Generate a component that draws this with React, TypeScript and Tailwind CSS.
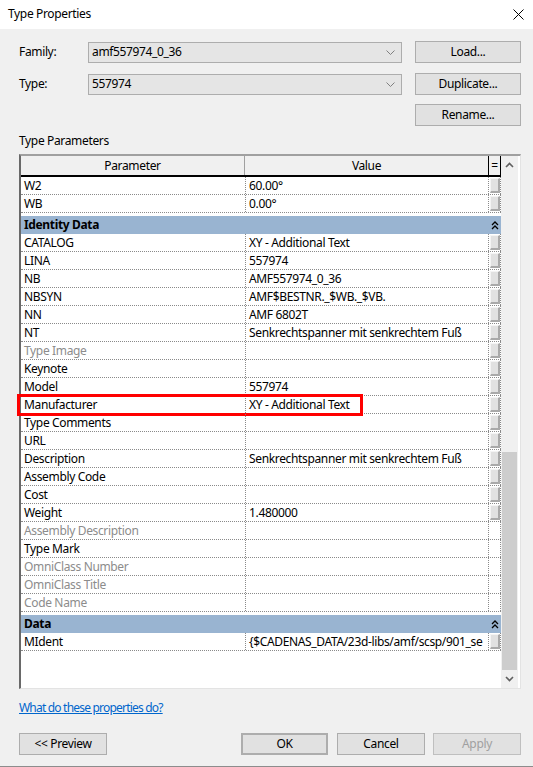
import React from "react";

type Row =
  | { kind: "group"; label: string; gapTop?: boolean }
  | { kind: "row"; p: string; v?: string; gray?: boolean; btn?: boolean; hl?: boolean };

const rows: Row[] = [
  { kind: "row", p: "W2", v: "60.00°", btn: true },
  { kind: "row", p: "WB", v: "0.00°", btn: true },
  { kind: "group", label: "Identity Data", gapTop: true },
  { kind: "row", p: "CATALOG", v: "XY - Additional Text", btn: true },
  { kind: "row", p: "LINA", v: "557974", btn: true },
  { kind: "row", p: "NB", v: "AMF557974_0_36", btn: true },
  { kind: "row", p: "NBSYN", v: "AMF$BESTNR._$WB._$VB.", btn: true },
  { kind: "row", p: "NN", v: "AMF 6802T", btn: true },
  { kind: "row", p: "NT", v: "Senkrechtspanner mit senkrechtem Fuß", btn: true },
  { kind: "row", p: "Type Image", gray: true, btn: true },
  { kind: "row", p: "Keynote", btn: true },
  { kind: "row", p: "Model", v: "557974", btn: true },
  { kind: "row", p: "Manufacturer", v: "XY - Additional Text", btn: true, hl: true },
  { kind: "row", p: "Type Comments", btn: true },
  { kind: "row", p: "URL", btn: true },
  { kind: "row", p: "Description", v: "Senkrechtspanner mit senkrechtem Fuß", btn: true },
  { kind: "row", p: "Assembly Code", btn: true },
  { kind: "row", p: "Cost", btn: true },
  { kind: "row", p: "Weight", v: "1.480000", btn: true },
  { kind: "row", p: "Assembly Description", gray: true },
  { kind: "row", p: "Type Mark" },
  { kind: "row", p: "OmniClass Number", gray: true },
  { kind: "row", p: "OmniClass Title", gray: true },
  { kind: "row", p: "Code Name", gray: true },
  { kind: "group", label: "Data", gapTop: true },
  { kind: "row", p: "MIdent", v: "{$CADENAS_DATA/23d-libs/amf/scsp/901_se", btn: true },
];

function Chevron({ up }: { up?: boolean }) {
  return (
    <svg width="9" height="6" viewBox="0 0 9 6">
      <path
        d={up ? "M1 5 L4.5 1.5 L8 5" : "M1 1 L4.5 4.5 L8 1"}
        fill="none"
        stroke="#606060"
        strokeWidth="1.6"
      />
    </svg>
  );
}

function DoubleUp() {
  return (
    <svg width="8" height="9" viewBox="0 0 8 9">
      <path d="M1 4 L4 1 L7 4 M1 8 L4 5 L7 8" fill="none" stroke="#000" strokeWidth="1.3" />
    </svg>
  );
}

function EditBtn() {
  return (
    <div className="w-[13px] h-full border-l border-r border-dotted border-[#8a8a8a] flex items-center justify-center">
      <div className="w-[10px] h-[15px] bg-[#e1e1e1] border-t border-l border-t-[#f4f4f4] border-l-[#f4f4f4] border-b-2 border-r-2 border-b-[#a9a9a9] border-r-[#a9a9a9]" />
    </div>
  );
}

function Btn({ children, className = "" }: { children: React.ReactNode; className?: string }) {
  return (
    <div
      className={
        "h-[22px] flex items-center justify-center bg-[#e1e1e1] border border-[#adadad] " + className
      }
    >
      {children}
    </div>
  );
}

function Combo({ value }: { value: string }) {
  return (
    <div className="w-[314px] h-[21px] bg-[#e5e5e5] border border-[#adadad] flex items-center pl-[3px] pr-[6px]">
      <span className="flex-1">{value}</span>
      <svg width="9" height="5" viewBox="0 0 9 5">
        <path d="M0.5 0.5 L4.5 4.5 L8.5 0.5" fill="none" stroke="#808080" strokeWidth="1" />
      </svg>
    </div>
  );
}

export default function App() {
  return (
    <div
      className="w-[533px] h-[767px] bg-[#f0f0f0] text-[12px] leading-none tracking-[-0.35px] text-black overflow-hidden flex flex-col border-b border-[#8c8c8c]"
      style={{ fontFamily: '"Segoe UI", "Noto Sans", sans-serif' }}
    >
      {/* Title bar */}
      <div className="h-[29px] bg-white flex items-center justify-between pl-[8px] pr-[9px] shrink-0">
        <span className="text-[12px] -mt-[2px]">Type Properties</span>
        <svg width="11" height="11" viewBox="0 0 11 11">
          <path d="M0.5 0.5 L10.5 10.5 M10.5 0.5 L0.5 10.5" stroke="#000" strokeWidth="1" />
        </svg>
      </div>

      <div className="pl-[19px] pr-[12px] flex flex-col flex-1">
        {/* Family */}
        <div className="mt-[12px] flex items-center">
          <span className="w-[69px]">Family:</span>
          <Combo value="amf557974_0_36" />
          <Btn className="ml-[13px] w-[106px]">Load...</Btn>
        </div>
        <div className="mt-[10px] flex items-center">
          <span className="w-[69px]">Type:</span>
          <Combo value="557974" />
          <Btn className="ml-[13px] w-[106px]">Duplicate...</Btn>
        </div>
        <div className="mt-[9px] flex justify-end">
          <Btn className="w-[106px]">Rename...</Btn>
        </div>

        <div className="mt-[9px] h-[12px] flex items-center">Type Parameters</div>

        {/* Table */}
        <div className="mt-[7px] h-[535px] border-t-2 border-l-2 border-t-[#a0a0a0] border-l-[#696969] border-r border-b border-r-[#e3e3e3] border-b-[#e3e3e3] bg-white flex">
          <div className="w-[480px] flex flex-col">
            {/* header */}
            <div className="h-[21px] flex bg-[#f0f0f0] border-b-2 border-black shrink-0">
              <div className="w-[224px] flex items-center justify-center border-r border-[#a0a0a0]">
                Parameter
              </div>
              <div className="w-[243px] flex items-center justify-center">Value</div>
              <div className="w-[13px] flex items-center justify-center border-l border-r border-black">
                =
              </div>
            </div>
            {rows.map((r, i) =>
              r.kind === "group" ? (
                <div key={i} className={"h-[18px] shrink-0 flex bg-[#99b4d1] " + (r.gapTop ? "mt-[3px]" : "")}>
                  <div className="flex-1 flex items-center pl-[3px] font-bold">{r.label}</div>
                  <div className="w-[13px] flex items-center justify-center">
                    <DoubleUp />
                  </div>
                </div>
              ) : (
                <div key={i} className="relative h-[18px] shrink-0 flex border-b border-dotted border-[#8a8a8a]">
                  <div className={"w-[224px] flex items-center pl-[3px] " + (r.gray ? "text-[#8c8c8c]" : "")}>
                    {r.p}
                  </div>
                  <div className="w-[243px] flex items-center pl-[3px] border-l border-dotted border-[#8a8a8a] whitespace-nowrap overflow-hidden">
                    {r.v ?? ""}
                  </div>
                  {r.btn ? (
                    <EditBtn />
                  ) : (
                    <div className="w-[13px] border-l border-r border-dotted border-[#8a8a8a]" />
                  )}
                  {r.hl && (
                    <div className="absolute left-[-4px] top-[-2px] w-[346px] h-[22px] border-[3px] border-[#ff0000] pointer-events-none" />
                  )}
                </div>
              )
            )}
          </div>
          {/* Scrollbar */}
          <div className="w-[17px] bg-[#f0f0f0] flex flex-col shrink-0">
            <div className="h-[17px] flex items-center justify-center">
              <Chevron up />
            </div>
            <div className="h-[279px]" />
            <div className="mx-[1px] h-[218px] bg-[#cdcdcd]" />
            <div className="flex-1 flex items-center justify-center">
              <Chevron />
            </div>
          </div>
        </div>

        <div className="mt-[13px] h-[12px] flex items-center">
          <span className="text-[#0066cc] underline tracking-[-0.8px]">What do these properties do?</span>
        </div>

        <div className="mt-[19px] flex items-center">
          <Btn className="w-[88px]">&lt;&lt; Preview</Btn>
          <Btn className="ml-[134px] w-[87px] border-2 border-[#0078d7]">OK</Btn>
          <Btn className="ml-[9px] w-[88px]">Cancel</Btn>
          <Btn className="ml-[8px] w-[88px] bg-[#cccccc] border-[#bfbfbf] text-[#a0a0a0]">Apply</Btn>
        </div>
      </div>
    </div>
  );
}
